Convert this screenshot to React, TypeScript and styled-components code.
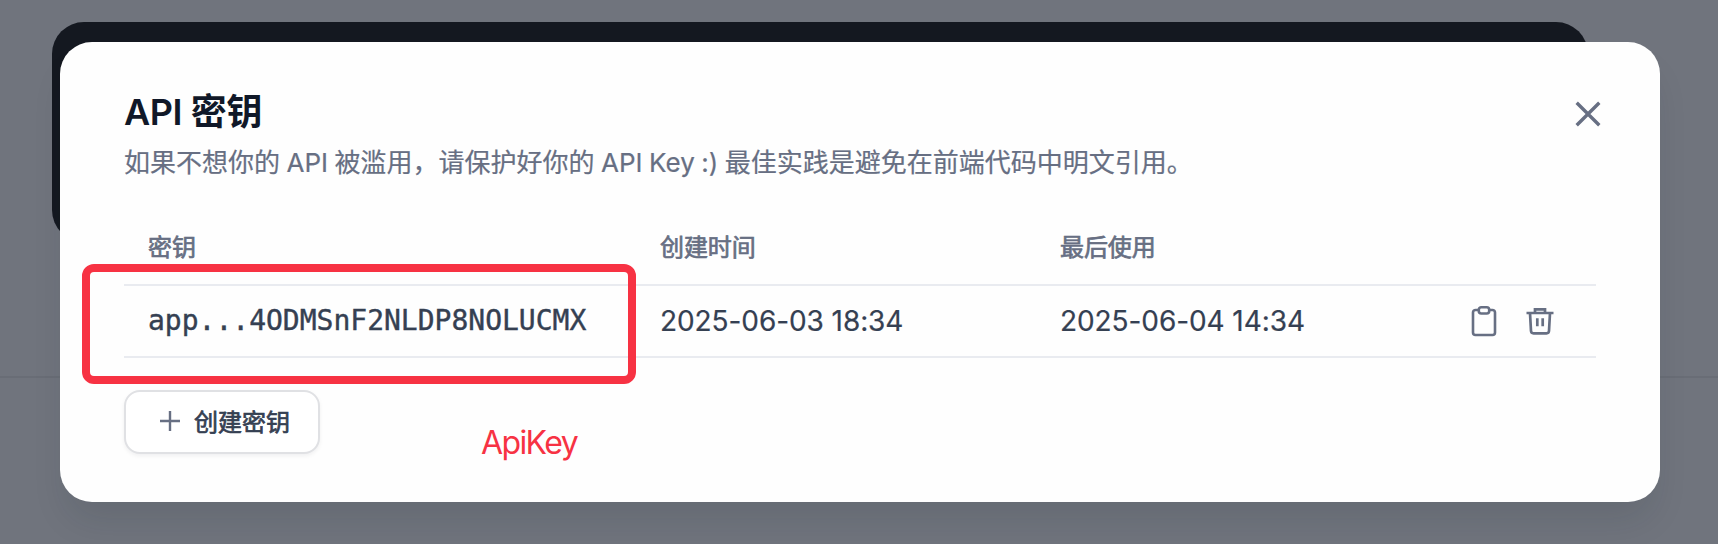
import React from "react";
import styled, { createGlobalStyle } from "styled-components";

const sans = `Inter, "Noto Sans CJK SC", sans-serif`;

const GlobalStyle = createGlobalStyle`
  * { box-sizing: border-box; }
  body { margin: 0; font-family: ${sans}; overflow: hidden; background: #70747d; }
`;

const Page = styled.div`
  position: relative;
  height: 544px;
  padding: 42px 58px 42px 60px;
  overflow: hidden;
  background: linear-gradient(#70747d 376px, #696d76 376px, #696d76 378px, #70747d 378px);
`;

const CodeCard = styled.div`
  position: absolute;
  left: 52px;
  top: 22px;
  width: 1536px;
  height: 220px;
  border-radius: 32px;
  background: #141820;
`;

const Modal = styled.section`
  position: relative;
  width: 1600px;
  height: 460px;
  padding: 48px 64px;
  border-radius: 32px;
  background: #fefefe;
  box-shadow: 0 24px 36px -8px rgba(16, 30, 40, 0.12);
`;

const Header = styled.header`
  display: flex;
  justify-content: space-between;
`;

const Title = styled.h1`
  margin: 0;
  font-size: 36px;
  font-weight: 600;
  line-height: 44px;
  letter-spacing: -0.4px;
  color: #101828;
`;

const Description = styled.p`
  margin: 9px 0 0;
  font-size: 26px;
  line-height: 40px;
  word-spacing: -0.8px;
  color: #676f83;
  -webkit-text-stroke: 0.2px currentColor;
`;

const CloseButton = styled.button`
  width: 48px;
  height: 48px;
  margin: 0 -16px 0 0;
  padding: 0;
  border: 0;
  background: none;
  color: #676f83;
`;

const Table = styled.div`
  margin-top: 29px;
`;

const Row = styled.div<{ $head?: boolean }>`
  display: grid;
  grid-template-columns: 512px 400px 1fr auto;
  align-items: center;
  height: ${(p) => (p.$head ? 74 : 72)}px;
  padding: ${(p) => (p.$head ? "0 40px 5px 24px" : "0 40px 1px 24px")};
  border-bottom: 2px solid #e9ebf0;
  color: ${(p) => (p.$head ? "#676f83" : "#354052")};
  font-size: ${(p) => (p.$head ? 24 : 28)}px;
  letter-spacing: ${(p) => (p.$head ? "-0.1px" : "-0.08px")};
  -webkit-text-stroke: ${(p) => (p.$head ? 0.7 : 0.2)}px currentColor;
`;

const KeyText = styled.span`
  font-family: "DejaVu Sans Mono", monospace;
  font-size: 28px;
  letter-spacing: 0;
  -webkit-text-stroke: 0.4px currentColor;
`;

const Actions = styled.div`
  display: flex;
  gap: 24px;
  color: #676f83;
  svg { display: block; }
`;

const CreateButton = styled.button`
  display: flex;
  align-items: center;
  gap: 14px;
  width: 196px;
  height: 64px;
  margin-top: 32px;
  padding: 0 0 2px 34px;
  border: 2px solid #e0e1e4;
  border-radius: 16px;
  background: #fff;
  box-shadow: 0 2px 4px rgba(16, 24, 40, 0.06);
  font: 400 24px ${sans};
  color: #354052;
  -webkit-text-stroke: 0.7px currentColor;

  span { padding-bottom: 2px; }
`;

const Highlight = styled.div`
  position: absolute;
  left: 82px;
  top: 264px;
  width: 554px;
  height: 120px;
  border: 8px solid #f73243;
  border-radius: 12px;
`;

const Note = styled.div`
  position: absolute;
  left: 481px;
  top: 423px;
  font-size: 32px;
  line-height: 40px;
  letter-spacing: -1.6px;
  color: #f73243;
`;

const CloseIcon = () => (
  <svg width="48" height="48" viewBox="0 0 48 48" fill="none" stroke="currentColor" strokeWidth="3.4">
    <path d="M12.7 12.7 35.3 35.3M35.3 12.7 12.7 35.3" />
  </svg>
);

const ClipboardIcon = () => (
  <svg width="32" height="32" viewBox="0 0 32 32" fill="none" stroke="currentColor" strokeWidth="2.6">
    <path d="M10.5 5H7.500A2.500 2.500 0 0 0 5 7.500v20A2.500 2.500 0 0 0 7.500 30h17a2.500 2.500 0 0 0 2.500-2.500v-20A2.500 2.500 0 0 0 24.500 5h-3" />
    <rect x="10.800" y="2.200" width="10.400" height="6.300" rx="2.500" />
  </svg>
);

const TrashIcon = () => (
  <svg width="32" height="32" viewBox="0 0 32 32" fill="none" stroke="currentColor" strokeWidth="2.700">
    <path d="M2.500 8h27M11 8V4.300h10V8M6 8l1 18a2.500 2.500 0 0 0 2.500 2.300h13A2.500 2.500 0 0 0 25 26l1-18M13.300 13.300v8M18.700 13.300v8" />
  </svg>
);

const PlusIcon = () => (
  <svg width="20" height="20" viewBox="0 0 20 20" fill="none" stroke="#676f83" strokeWidth="2.400">
    <path d="M10 0v20M0 10h20" />
  </svg>
);

export default function App() {
  return (
    <Page>
      <GlobalStyle />
      <CodeCard />
      <Modal>
        <Header>
          <div>
            <Title>API 密钥</Title>
            <Description>如果不想你的 API 被滥用，请保护好你的 API Key :) 最佳实践是避免在前端代码中明文引用。</Description>
          </div>
          <CloseButton aria-label="关闭"><CloseIcon /></CloseButton>
        </Header>
        <Table>
          <Row $head>
            <span>密钥</span>
            <span>创建时间</span>
            <span>最后使用</span>
          </Row>
          <Row>
            <KeyText>app...4ODMSnF2NLDP8NOLUCMX</KeyText>
            <span>2025-06-03 18:34</span>
            <span>2025-06-04 14:34</span>
            <Actions>
              <ClipboardIcon />
              <TrashIcon />
            </Actions>
          </Row>
        </Table>
        <CreateButton>
          <PlusIcon />
          <span>创建密钥</span>
        </CreateButton>
      </Modal>
      <Highlight />
      <Note>ApiKey</Note>
    </Page>
  );
}
